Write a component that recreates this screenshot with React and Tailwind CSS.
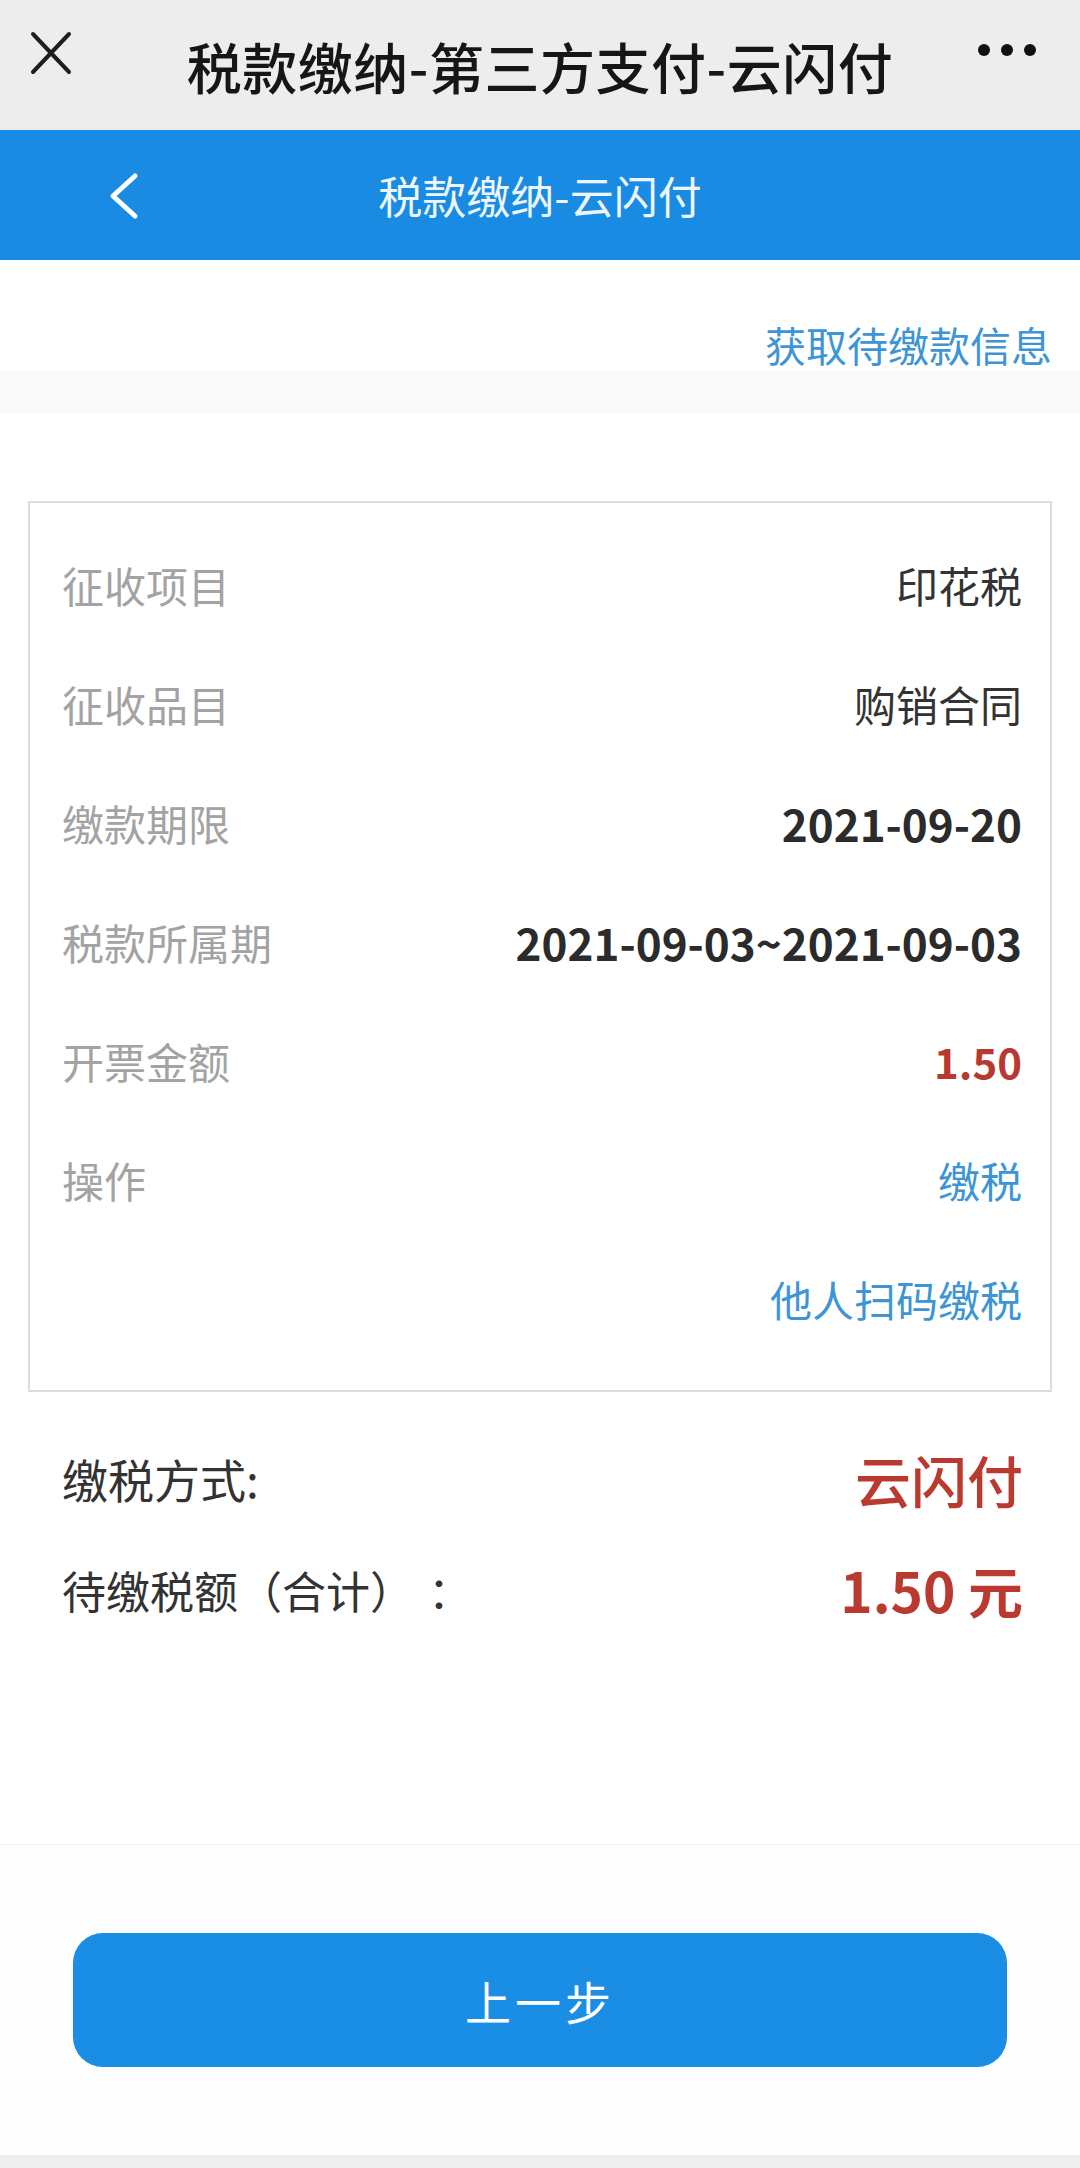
import React from "react";

const font = { fontFamily: '"Noto Sans CJK SC", "Noto Sans", sans-serif' };

function Row({ label, value, valueClass }) {
  return (
    <div className="flex h-[119px] items-center justify-between">
      <span className="text-[42px] text-[#a3a3a3]">{label}</span>
      <span className={"text-[42px] " + valueClass}>{value}</span>
    </div>
  );
}

export default function App() {
  return (
    <div style={font} className="flex min-h-[2168px] w-[1080px] flex-col bg-white [text-spacing-trim:space-all]">
      {/* WeChat top bar */}
      <div className="relative flex h-[130px] items-center justify-center bg-[#ededed]">
        <svg className="absolute left-[30px] top-[31px]" width="42" height="44" viewBox="0 0 42 44">
          <path d="M3 3 L39 41 M39 3 L3 41" stroke="#1e1e1e" strokeWidth="4" fill="none" strokeLinecap="round" />
        </svg>
        <span className="text-[55px] font-medium leading-none tracking-[0.5px] text-[#161616]">税款缴纳-第三方支付-云闪付</span>
        <div className="absolute left-[978px] top-[44px] flex gap-[11px]">
          <span className="h-[12px] w-[12px] rounded-full bg-[#111]" />
          <span className="h-[12px] w-[12px] rounded-full bg-[#111]" />
          <span className="h-[12px] w-[12px] rounded-full bg-[#111]" />
        </div>
      </div>

      {/* Blue nav bar */}
      <div className="relative flex h-[130px] items-center justify-center bg-[#1a8be2]">
        <svg className="absolute left-[106px] top-[42px]" width="34" height="48" viewBox="0 0 34 48">
          <path d="M29 4 L7 24 L29 44" stroke="#ffffff" strokeWidth="5" fill="none" strokeLinecap="round" strokeLinejoin="round" />
        </svg>
        <span className="text-[44px] leading-none text-[#eef6fd]">税款缴纳-云闪付</span>
      </div>

      {/* link area */}
      <div className="flex h-[111px] justify-end pr-[28px] pt-[54px]">
        <span className="text-[41px] leading-[60px] text-[#3d95d6]">获取待缴款信息</span>
      </div>
      <div className="h-[42px] bg-[#f9f9f9]" />

      {/* card */}
      <div className="mx-[28px] mt-[88px] border-2 border-[#dddddd] bg-white pb-[32px] pl-[32px] pr-[28px] pt-[22px]">
        <Row label="征收项目" value="印花税" valueClass="text-[#333]" />
        <Row label="征收品目" value="购销合同" valueClass="text-[#333]" />
        <Row label="缴款期限" value="2021-09-20" valueClass="text-[44px] font-bold text-[#2b2b2b]" />
        <Row label="税款所属期" value="2021-09-03~2021-09-03" valueClass="text-[44px] font-bold text-[#2b2b2b]" />
        <Row label="开票金额" value="1.50" valueClass="font-bold text-[#b8392f]" />
        <Row label="操作" value="缴税" valueClass="text-[#3d95d6]" />
        <div className="flex h-[119px] items-center justify-end">
          <span className="text-[42px] text-[#3d95d6]">他人扫码缴税</span>
        </div>
      </div>

      {/* summary */}
      <div className="mt-[31px] pl-[62px] pr-[57px]">
        <div className="flex h-[111px] items-center justify-between">
          <span className="text-[46px] text-[#333]">缴税方式:</span>
          <span className="text-[56px] font-medium text-[#bb3a30]">云闪付</span>
        </div>
        <div className="flex h-[111px] items-center justify-between">
          <span className="text-[44px] text-[#333]">
            待缴税额（合计）<span className="ml-[14px]">：</span>
          </span>
          <span className="text-[55px] font-semibold text-[#bb3a30]">1.50 元</span>
        </div>
      </div>

      <div className="h-[199px]" />
      <div className="flex-1 border-t border-[#f3f3f3] bg-[#fefefe] pt-[88px]">
        <div className="mx-[73px] flex h-[134px] items-center justify-center rounded-[30px] bg-[#1a8de5]">
          <span className="text-[46px] tracking-[4px] text-white">上一步</span>
        </div>
      </div>
      <div className="h-[13px] bg-[#efefef]" />
    </div>
  );
}
